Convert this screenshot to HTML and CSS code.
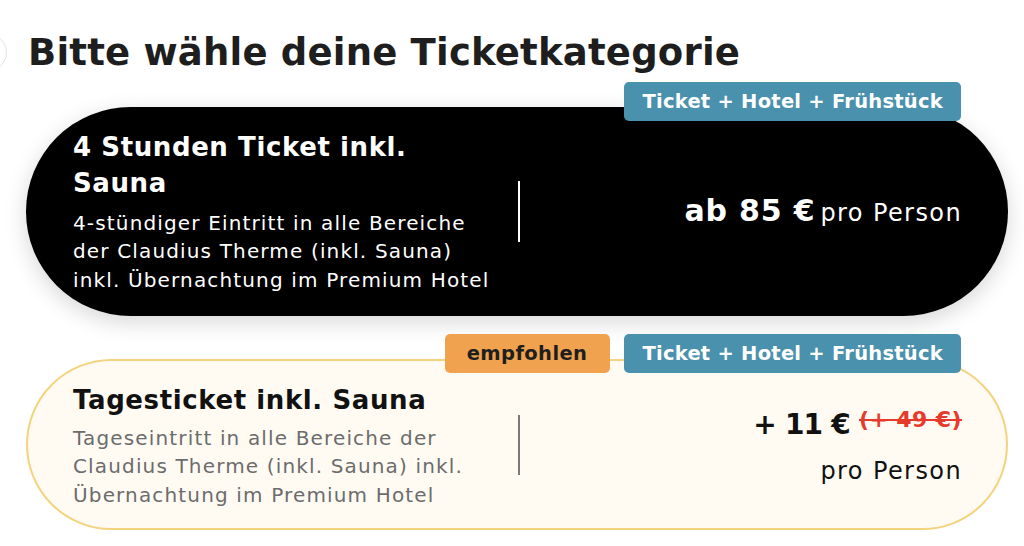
FILE: index.html
```html
<!DOCTYPE html>
<html lang="de">
<head>
<meta charset="utf-8">
<link rel="stylesheet" href="styles.css">
</head>
<body>
<div class="page">
  <span class="back"></span>
  <h1 class="heading">Bitte wähle deine Ticketkategorie</h1>

  <div class="option">
    <div class="badges">
      <span class="badge badge-blue">Ticket + Hotel + Frühstück</span>
    </div>
    <div class="card card-dark">
      <div class="info">
        <div class="title">4 Stunden Ticket inkl.<br>Sauna</div>
        <div class="desc">4-stündiger Eintritt in alle Bereiche<br>der Claudius Therme (inkl. Sauna)<br>inkl. Übernachtung im Premium Hotel</div>
      </div>
      <div class="divider"></div>
      <div class="price">
        <span class="amount">ab 85 €</span> <span class="per">pro Person</span>
      </div>
    </div>
  </div>

  <div class="option option-second">
    <div class="badges">
      <span class="badge badge-orange">empfohlen</span>
      <span class="badge badge-blue">Ticket + Hotel + Frühstück</span>
    </div>
    <div class="card card-light">
      <div class="info">
        <div class="title">Tagesticket inkl. Sauna</div>
        <div class="desc">Tageseintritt in alle Bereiche der<br>Claudius Therme (inkl. Sauna) inkl.<br>Übernachtung im Premium Hotel</div>
      </div>
      <div class="divider"></div>
      <div class="price price-stack">
        <div class="price-line"><span class="amount amount-small">+ 11 €</span> <span class="old">(+ 49 €)</span></div>
        <div class="per">pro Person</div>
      </div>
    </div>
  </div>
</div>
</body>
</html>
```

FILE: styles.css
```css
* { box-sizing: border-box; }
html, body { margin: 0; padding: 0; background: #ffffff; }
body {
  font-family: "DejaVu Sans", Inter, sans-serif;
  color: #1f1f1f;
  overflow: hidden;
}
.page {
  position: relative;
  padding: 0 16px 0 26px;
}
.back {
  position: absolute;
  left: -30px;
  top: 34px;
  width: 37px;
  height: 37px;
  border-radius: 50%;
  border: 1.5px solid #e2e2e2;
}
.heading {
  margin: 0;
  padding: 30px 0 0 2px;
  font-size: 37px;
  line-height: 46px;
  font-weight: 700;
  color: #1e1e1e;
  letter-spacing: 0.2px;
}
.option { margin-top: 6px; }
.option-second { margin-top: 18px; }
.badges {
  position: relative;
  z-index: 2;
  display: flex;
  justify-content: flex-end;
  gap: 14px;
  padding-right: 47px;
  margin-bottom: -14px;
}
.badge {
  display: inline-block;
  height: 39px;
  line-height: 39px;
  padding: 0 18px;
  border-radius: 5px;
  font-size: 19.5px;
  font-weight: 700;
  letter-spacing: 0.25px;
}
.badge-blue { background: #4a91ad; color: #ffffff; }
.badge-orange { background: #f0a24f; color: #1e1e1e; padding: 0 23px 0 22px; letter-spacing: 0.4px; }
.card {
  position: relative;
  display: flex;
  align-items: center;
  border-radius: 110px;
  padding: 0 46px 0 47px;
}
.card-dark {
  height: 209px;
  background: #000000;
  color: #ffffff;
  box-shadow: 0 6px 22px rgba(0, 0, 0, 0.16);
}
.card-light {
  height: 171px;
  background: #fffbf3;
  border: 2px solid #f4d37e;
  padding-left: 45px;
  padding-right: 44px;
  color: #111111;
}
.info { width: 445px; flex: none; }
.card-light .info { padding-top: 2px; }
.title {
  font-size: 26px;
  line-height: 36px;
  font-weight: 700;
  letter-spacing: 0.6px;
  margin-bottom: 8px;
}
.card-light .title { margin-bottom: 6px; }
.desc {
  font-size: 20px;
  line-height: 28.5px;
  font-weight: 400;
  letter-spacing: 1.15px;
  white-space: nowrap;
}
.card-light .desc { color: #6c6c6c; }
.divider {
  width: 2px;
  height: 61px;
  background: #ffffff;
  flex: none;
}
.card-light .divider { background: #7a7a7a; height: 60px; }
.price {
  flex: 1;
  text-align: right;
  white-space: nowrap;
}
.card-dark .price { margin-top: -2px; }
.amount {
  font-size: 30px;
  font-weight: 700;
  letter-spacing: 0.8px;
}
.amount-small {
  font-size: 28px;
  letter-spacing: -0.8px;
}
.per {
  font-size: 24px;
  font-weight: 400;
  letter-spacing: 1.4px;
}
.price-stack { margin-top: 6px; }
.price-line { line-height: 40px; }
.old {
  position: relative;
  top: -7px;
  font-size: 22px;
  font-weight: 700;
  color: #e63b2c;
  letter-spacing: 0.4px;
  text-decoration: line-through;
  text-decoration-thickness: 2px;
  margin-left: 4px;
}
.price-stack .per { line-height: 40px; margin-top: 2px; }
```
